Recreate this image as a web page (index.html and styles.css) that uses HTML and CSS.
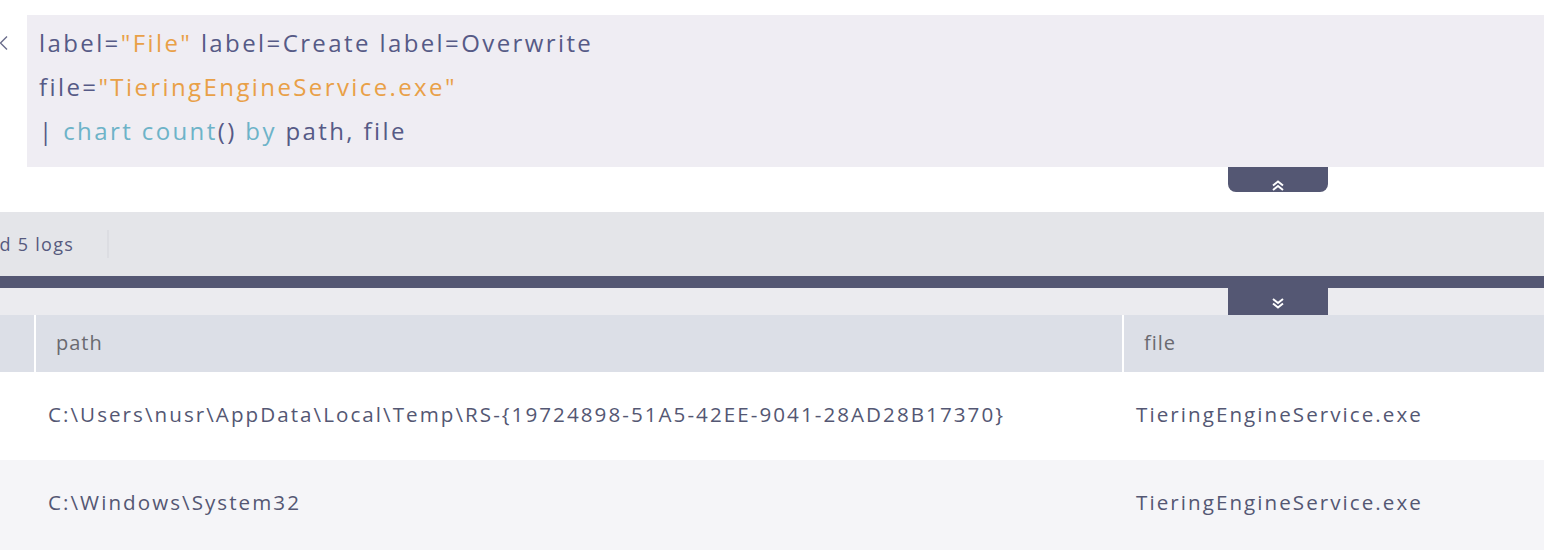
FILE: index.html
```html
<!DOCTYPE html>
<html>
<head>
<meta charset="utf-8">
<link rel="stylesheet" href="styles.css">
</head>
<body>
<div class="page">
  <div class="query-wrap">
    <div class="back">
      <svg width="10" height="16" viewBox="0 0 10 16"><path d="M8 1.5 L1.5 8 L8 14.5" fill="none" stroke="#6b6e8c" stroke-width="1.4"/></svg>
    </div>
    <div class="query-box">
      <div class="line">label=<span class="str">"File"</span> label=Create label=Overwrite</div>
      <div class="line">file=<span class="str">"TieringEngineService.exe"</span></div>
      <div class="line">| <span class="kw">chart count</span>() <span class="kw">by</span> path, file</div>
    </div>
  </div>
  <div class="collapse-row">
    <div class="tab tab-up">
      <svg width="14" height="11" viewBox="0 0 14 11"><path d="M2 5.5 L7 1.5 L12 5.5 M2 10 L7 6 L12 10" fill="none" stroke="#fff" stroke-width="2"/></svg>
    </div>
  </div>
  <div class="status-bar">
    <span class="count">Found 5 logs</span>
    <span class="vdiv"></span>
  </div>
  <div class="dark-bar"></div>
  <div class="lower-row">
    <div class="tab tab-down">
      <svg width="14" height="11" viewBox="0 0 14 11"><path d="M2 1 L7 5 L12 1 M2 5.5 L7 9.5 L12 5.5" fill="none" stroke="#fff" stroke-width="2"/></svg>
    </div>
  </div>
  <div class="table">
    <div class="row head">
      <div class="c0"></div>
      <div class="c1">path</div>
      <div class="c2">file</div>
    </div>
    <div class="row body">
      <div class="c0"></div>
      <div class="c1">C:\Users\nusr\AppData\Local\Temp\RS-{19724898-51A5-42EE-9041-28AD28B17370}</div>
      <div class="c2">TieringEngineService.exe</div>
    </div>
    <div class="row body alt">
      <div class="c0"></div>
      <div class="c1">C:\Windows\System32</div>
      <div class="c2">TieringEngineService.exe</div>
    </div>
  </div>
</div>
</body>
</html>
```
FILE: styles.css
```css
html, body {
  margin: 0;
  padding: 0;
  background: #ffffff;
  overflow: hidden;
}
.page {
  width: 1544px;
  height: 556px;
  overflow: hidden;
  font-family: "Open Sans", "Noto Sans", sans-serif;
  color: #565a7e;
}
.query-wrap {
  display: flex;
  padding-top: 15px;
}
.back {
  width: 28px;
  flex: none;
  display: flex;
  align-items: flex-start;
  padding-top: 20px;
  box-sizing: border-box;
  margin-left: -1px;
}
.query-box {
  flex: 1;
  background: #efedf3;
  padding: 6px 12px 14px 12px;
  font-size: 24px;
  line-height: 44px;
  letter-spacing: 2.4px;
  color: #565a86;
}
.str { color: #e9a047; }
.kw { color: #6db3c8; }
.collapse-row {
  height: 45px;
  display: flex;
}
.tab {
  margin-left: 1228px;
  width: 100px;
  background: #545773;
  display: flex;
  justify-content: center;
}
.tab-up {
  height: 25px;
  border-radius: 0 0 8px 8px;
  align-items: flex-end;
  padding-bottom: 1px;
  box-sizing: border-box;
}
.status-bar {
  height: 64px;
  background: #e4e5e9;
  display: flex;
  align-items: center;
}
.count {
  font-size: 18px;
  letter-spacing: 1.3px;
  margin-left: -48px;
  color: #565a7e;
  width: 155px;
  flex: none;
  white-space: nowrap;
}
.vdiv {
  width: 2px;
  height: 28px;
  background: #dcdde2;
}
.dark-bar {
  height: 12px;
  background: #545773;
}
.lower-row {
  height: 27px;
  background: #ebebef;
  display: flex;
}
.tab-down {
  height: 27px;
  align-items: center;
  padding-top: 3px;
  box-sizing: border-box;
}
.table {
  display: flex;
  flex-direction: column;
}
.row {
  display: grid;
  grid-template-columns: 34px 1086px 420px;
  column-gap: 2px;
  align-items: center;
}
.row.head {
  height: 57px;
  background: #ffffff;
  margin-bottom: 2px;
}
.row.head > div {
  background: #dcdfe7;
  height: 100%;
  display: flex;
  align-items: center;
  padding-left: 20px;
  padding-bottom: 3px;
  box-sizing: border-box;
  font-size: 20px;
  letter-spacing: 1px;
  color: #6a6a70;
}
.row.head > .c0 { padding-left: 0; }
.row.body {
  height: 86px;
  font-size: 20.6px;
  letter-spacing: 2.05px;
  color: #545773;
  padding-bottom: 6px;
  box-sizing: border-box;
}
.row.body.alt {
  height: 90px;
  background: #f5f5f8;
}
.row.body > div {
  padding-left: 12px;
}
.row.body > .c0 { padding-left: 0; }
```
